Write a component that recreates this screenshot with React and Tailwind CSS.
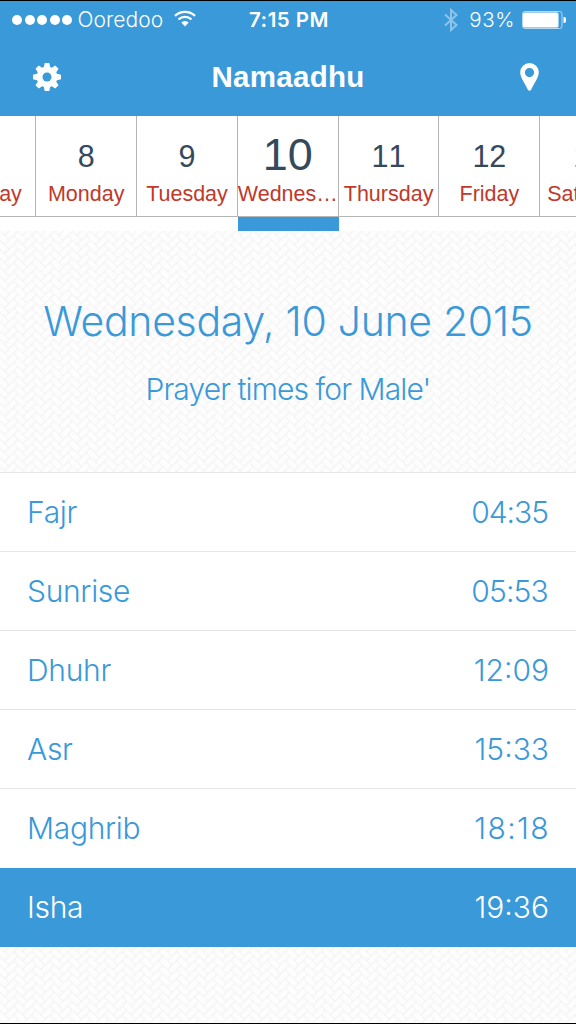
import React from "react";

const days = [
  { number: "7", name: "Sunday" },
  { number: "8", name: "Monday" },
  { number: "9", name: "Tuesday" },
  { number: "10", name: "Wednes…", active: true },
  { number: "11", name: "Thursday" },
  { number: "12", name: "Friday" },
  { number: "13", name: "Saturday" }
];

// Tracking evens out the widths of the proportional figures
const prayers = [
  { name: "Fajr", time: "04:35", tracking: "tracking-[-1px] mr-px" },
  { name: "Sunrise", time: "05:53", tracking: "tracking-[-0.8px] mr-px" },
  { name: "Dhuhr", time: "12:09", tracking: "tracking-normal" },
  { name: "Asr", time: "15:33", tracking: "tracking-normal" },
  { name: "Maghrib", time: "18:18", tracking: "tracking-[1.4px] -mr-px" },
  { name: "Isha", time: "19:36", tracking: "tracking-normal", active: true }
];

// Herringbone bricks on a 4x4 unit tile, with the ones that wrap round its edges
const UNIT = 6.4;
const bricks = [0, 1, 2, 3].flatMap((row) =>
  [-4, 0, 4].flatMap((shift) => [
    { x: row + shift, y: row, w: 2, h: 1 },
    { x: row + 3 + shift, y: row, w: 1, h: 2 },
    { x: row + 3 + shift, y: row - 4, w: 1, h: 2 }
  ])
);

function Weave({ id }) {
  return (
    <svg className="absolute inset-0 h-full w-full" aria-hidden="true">
      <defs>
        <pattern
          id={id}
          width={UNIT * 4}
          height={UNIT * 4}
          patternUnits="userSpaceOnUse"
          patternTransform="rotate(45)"
        >
          <rect width={UNIT * 4} height={UNIT * 4} fill="#f4f4f4" />
          {bricks.map((brick, index) => (
            <rect
              key={index}
              x={brick.x * UNIT + 0.6}
              y={brick.y * UNIT + 0.6}
              width={brick.w * UNIT - 1.2}
              height={brick.h * UNIT - 1.2}
              rx="0.8"
              fill="#fdfdfd"
            />
          ))}
        </pattern>
      </defs>
      <rect width="100%" height="100%" fill={`url(#${id})`} />
    </svg>
  );
}

function GearIcon() {
  return (
    <svg width="28" height="28" viewBox="-14 -14 28 28">
      <g fill="white">
        {[0, 45, 90, 135].map((angle) => (
          <path
            key={angle}
            d="M-2.3 -14H2.3L3.4 -9V9L2.3 14H-2.3L-3.4 9V-9Z"
            transform={`rotate(${angle})`}
          />
        ))}
        <circle r="10.4" />
      </g>
      <circle r="4.5" fill="#3a99d9" />
    </svg>
  );
}

function StatusBar() {
  return (
    <div className="flex h-[38px] items-center justify-between pl-3 pr-[10px]">
      <div className="flex w-[220px] items-center">
        <div className="-mt-px flex gap-[2.6px]">
          {[0, 1, 2, 3, 4].map((dot) => (
            <span key={dot} className="size-[10px] rounded-full bg-white" />
          ))}
        </div>
        <span className="ml-[5px] font-['Inter'] text-[21px] font-light tracking-[0.1px]">Ooredoo</span>
        <svg className="-mt-[3px] ml-[11px]" width="22" height="17" viewBox="0 0 22 17" fill="none">
          <path d="M1 5.8A14.5 14.5 0 0 1 21 5.8" stroke="white" strokeWidth="2.3" />
          <path d="M4.5 9.5A9.4 9.4 0 0 1 17.5 9.5" stroke="white" strokeWidth="2.3" />
          <path d="M7.3 12.6A5.3 5.3 0 0 1 14.7 12.6L11 16.4Z" fill="white" />
        </svg>
      </div>
      <span className="whitespace-nowrap font-['Inter'] text-[20.5px] font-semibold tracking-[0.5px]">7:15 PM</span>
      <div className="flex w-[220px] items-center justify-end">
        <svg width="14" height="24" viewBox="0 0 14 24" fill="none" stroke="#8fc4ea" strokeWidth="2">
          <path d="M1 6.5L12.5 17L7 22V2L12.5 7L1 17.5" />
        </svg>
        <span className="ml-[11px] font-['Inter'] text-[20.5px] font-light tracking-[0.6px]">93%</span>
        <svg className="-mt-px ml-[7px]" width="44" height="18" viewBox="0 0 44 18">
          <rect x="0.5" y="0.5" width="39.5" height="17" rx="2.5" fill="none" stroke="#b5d8f1" />
          <rect x="1" y="1.5" width="35.5" height="15" rx="1.5" fill="white" />
          <path d="M41.5 6A3 3 0 0 1 41.5 12Z" fill="white" />
        </svg>
      </div>
    </div>
  );
}

function Header() {
  return (
    <header className="h-[116px] border-t border-black bg-[#3a99d9] text-white">
      <StatusBar />
      <div className="flex h-[76px] items-center justify-between pl-[33px] pr-[37px]">
        <div className="flex w-[60px]">
          <GearIcon />
        </div>
        <h1 className="pl-1 font-['Liberation_Sans'] text-[29.5px] font-bold tracking-[0.3px]">Namaadhu</h1>
        <div className="flex w-[60px] justify-end">
          <svg width="19" height="28" viewBox="0 0 19 28">
            <path
              d="M9.5 0A9.3 9.3 0 0 0 0.2 9.3C0.2 15 6 22 7.7 26.5Q9.5 29 11.3 26.5C13 22 18.8 15 18.8 9.3A9.3 9.3 0 0 0 9.5 0ZM9.5 5A4.6 4.6 0 1 1 9.5 14.2A4.6 4.6 0 1 1 9.5 5Z"
              fill="white"
              fillRule="evenodd"
            />
          </svg>
        </div>
      </div>
    </header>
  );
}

function DayStrip() {
  return (
    <div className="h-[115px] overflow-hidden bg-white font-['Liberation_Sans']">
      <div className="-ml-[64.5px] flex w-[706px]">
        {days.map((day) => (
          <div key={day.name} className="w-[100.8px] shrink-0">
            <div className="flex h-[101px] flex-col items-center border-b border-r border-[#b5b5b5]">
              <div
                className={
                  day.active
                    ? "h-[66px] pt-[14px] text-[45px] leading-[50px] text-[#34495e]"
                    : "h-[66px] pt-[15px] text-[30.5px] leading-[50px] text-[#34495e] [font-kerning:none]"
                }
              >
                {day.number}
              </div>
              <div className="whitespace-nowrap text-center text-[21.5px] leading-[25px] text-[#c0392b]">
                {day.name}
              </div>
            </div>
            {day.active && <div className="h-[14px] bg-[#3a99d9]" />}
          </div>
        ))}
      </div>
    </div>
  );
}

export default function App() {
  return (
    <div className="flex h-[1024px] w-[576px] flex-col overflow-hidden bg-white">
      <Header />
      <DayStrip />
      <section className="relative h-[241px] text-center font-['Inter'] font-light text-[#3a99d9]">
        <Weave id="weave-top" />
        <div className="relative pt-[65px]">
          <h2 className="whitespace-nowrap text-[41px] leading-[50px] tracking-[-0.3px]">Wednesday, 10 June 2015</h2>
          <p className="mt-[25px] text-[30px] leading-[36px] tracking-[-0.9px]">Prayer times for Male'</p>
        </div>
      </section>
      <ul className="font-['Inter'] text-[30px] font-light">
        {prayers.map((prayer) => (
          <li
            key={prayer.name}
            className={
              prayer.active
                ? "flex h-[79.2px] items-center justify-between bg-[#3a99d9] px-[27px] text-white"
                : "flex h-[79.12px] items-center justify-between border-t border-[#e6e6e6] px-[27px] text-[#3a99d9]"
            }
          >
            <span className="tracking-[-0.3px]">{prayer.name}</span>
            <span className={prayer.tracking}>{prayer.time}</span>
          </li>
        ))}
      </ul>
      <div className="relative flex-1 border-b border-black">
        <Weave id="weave-bottom" />
      </div>
    </div>
  );
}
